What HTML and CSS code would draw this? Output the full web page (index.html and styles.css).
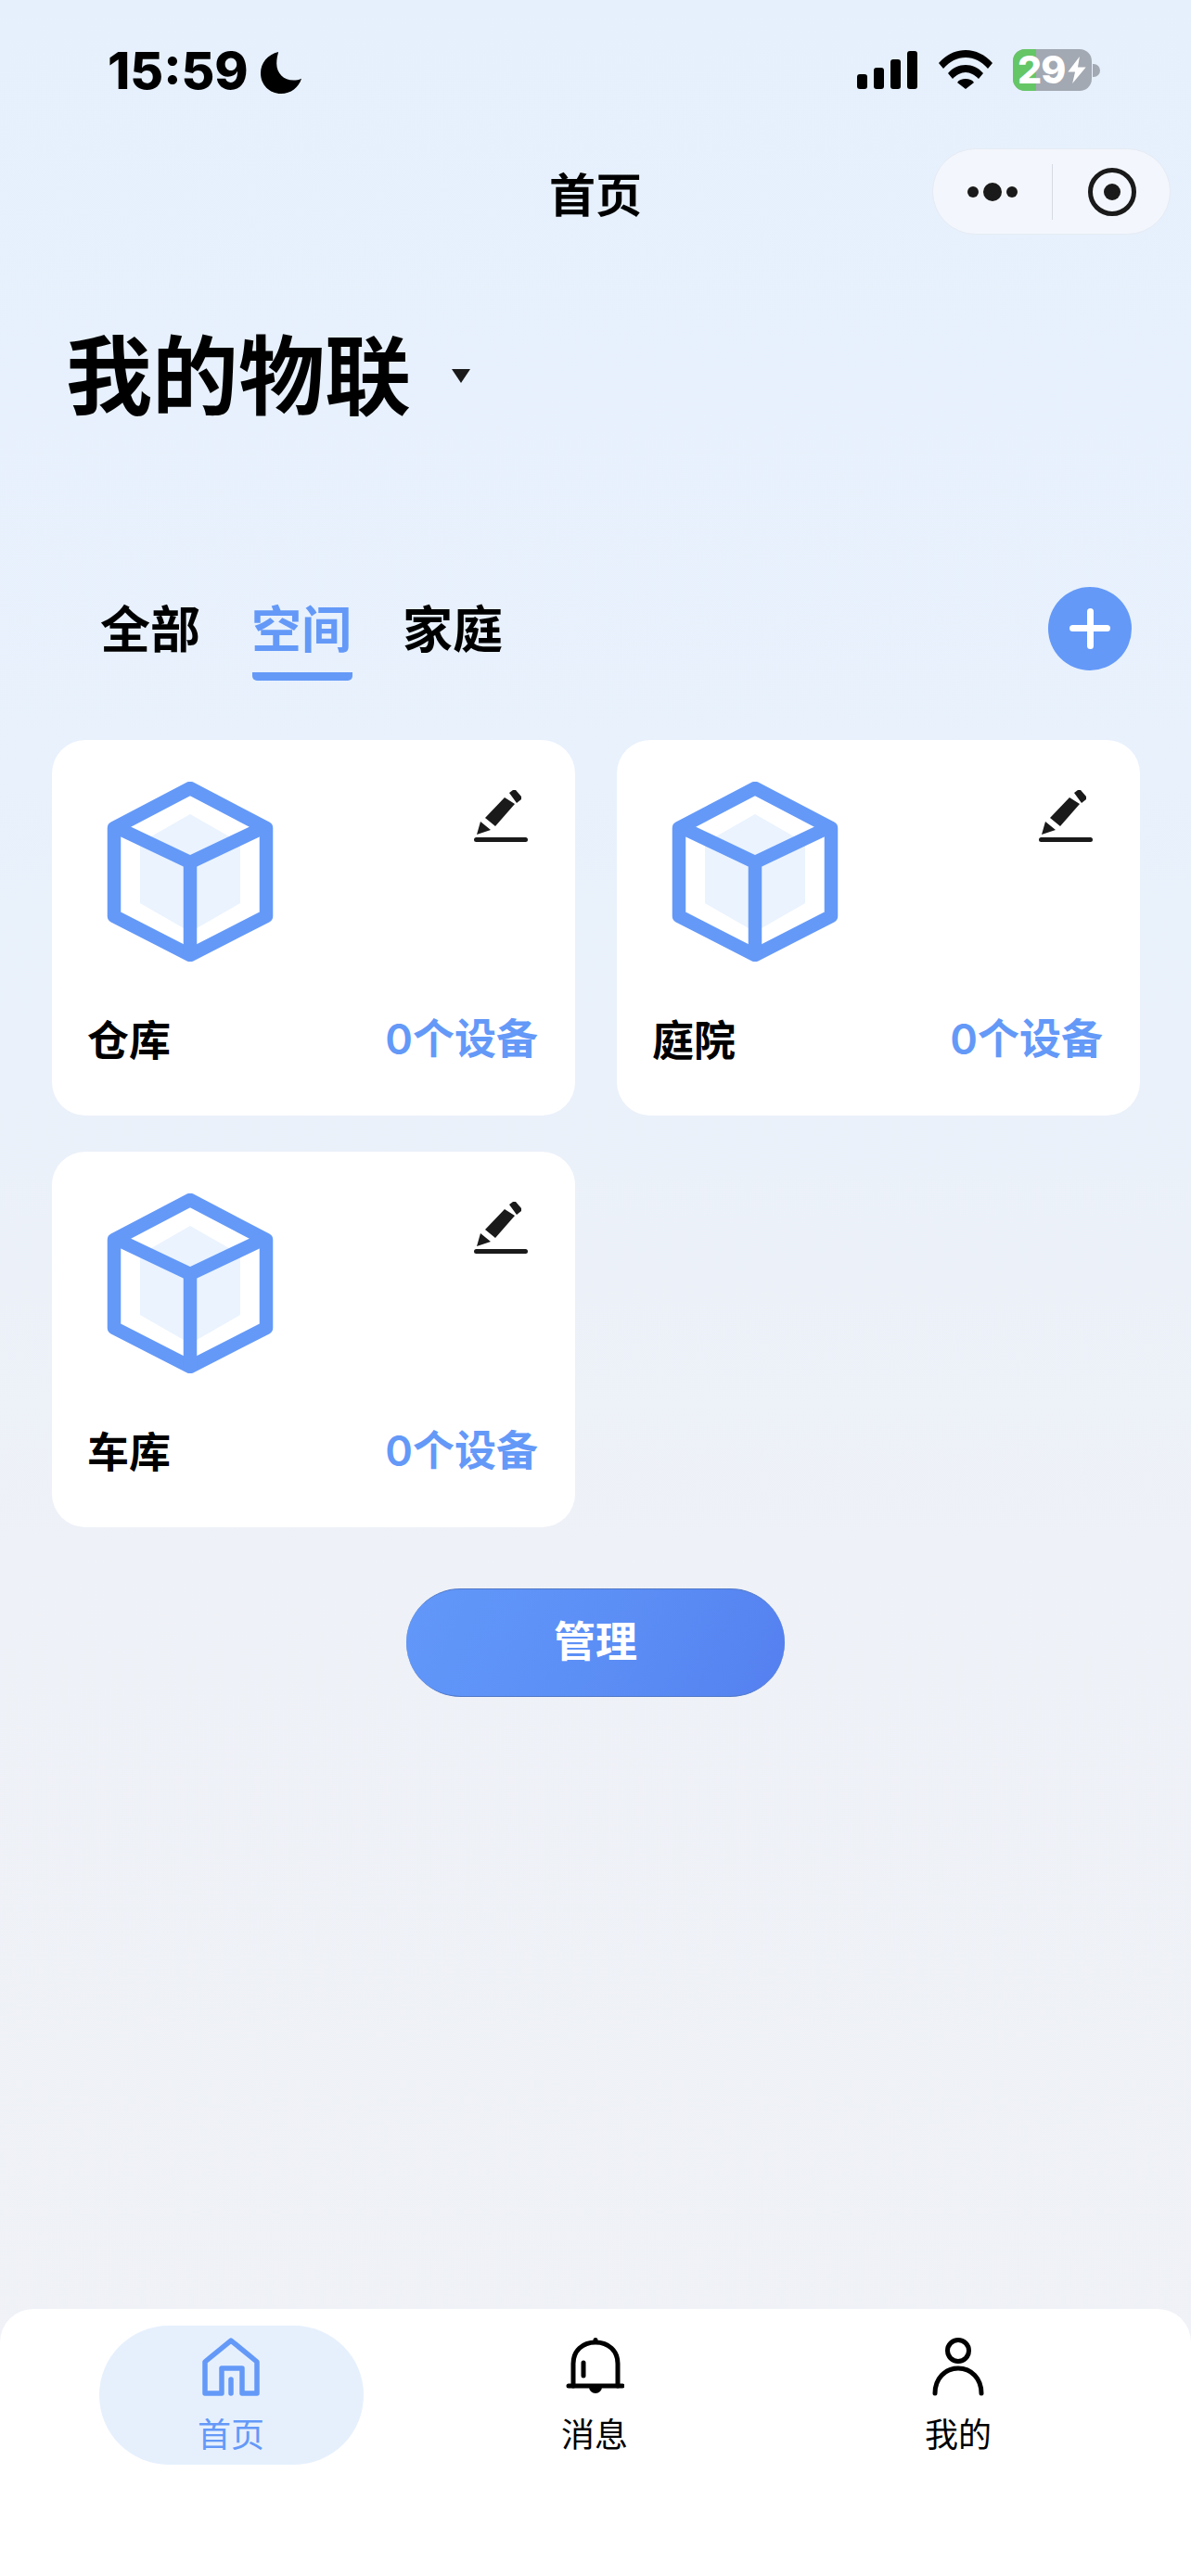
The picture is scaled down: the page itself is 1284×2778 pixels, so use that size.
FILE: index.html
```html
<!DOCTYPE html>
<html lang="zh">
<head>
<meta charset="utf-8">
<title>首页</title>
<link rel="stylesheet" href="styles.css">
</head>
<body>
<div class="screen">
  <header class="status">
    <div class="status-left">
      <span class="time">15:59</span>
      <svg class="moon" viewBox="0 0 46 48"><path d="M20 1C8 4 0 13 0 25c0 13 10 23 23 23 11 0 20-7 23-17-3 1.500-6 2-9 2-11 0-19-8-19-19 0-5 1-9 2-13z"/></svg>
    </div>
    <div class="status-right">
      <svg class="signal" viewBox="0 0 65 41"><rect x="0" y="25" width="11" height="16" rx="3"/><rect x="18" y="18" width="11" height="23" rx="3"/><rect x="36" y="9" width="11" height="32" rx="3"/><rect x="54" y="0" width="11" height="41" rx="3"/></svg>
      <svg class="wifi" viewBox="0 0 58 42"><path d="M0 14C8 5 18 0 29 0s21 5 29 14l-5 6C46 12 38 8 29 8S12 12 5 20z"/><path d="M10 25c5-6 12-9 19-9s14 3 19 9l-5 6c-4-4-9-7-14-7s-10 3-14 7z"/><path d="M20 35c2-3 5-4 9-4s7 1 9 4l-9 7z"/></svg>
      <div class="battery">
        <div class="battery-body"><div class="battery-fill"></div><span class="battery-num">29</span><svg class="bolt" viewBox="0 0 20 30"><path d="M13 0 0 17h8l-3 13L20 12h-9z"/></svg></div>
        <div class="battery-nub"></div>
      </div>
    </div>
  </header>

  <nav class="navbar">
    <div class="nav-title">首页</div>
    <div class="capsule">
      <div class="capsule-dots"><i class="dot"></i><i class="dot dot-big"></i><i class="dot"></i></div>
      <div class="capsule-sep"></div>
      <svg class="capsule-target" viewBox="0 0 52 52"><circle cx="26" cy="26" r="23.500" fill="none" stroke="#1a1a1a" stroke-width="5"/><circle cx="26" cy="26" r="9" fill="#1a1a1a"/></svg>
    </div>
  </nav>

  <section class="home-head">
    <h1 class="home-name">我的物联</h1>
    <span class="caret"></span>
  </section>

  <section class="tabs">
    <div class="tab-list">
      <div class="tab">全部</div>
      <div class="tab tab-active">空间</div>
      <div class="tab">家庭</div>
    </div>
    <div class="add-btn"><i class="plus-h"></i><i class="plus-v"></i></div>
  </section>

  <main class="grid">
    <article class="card">
      <div class="card-top">
        <svg class="cube" viewBox="0 0 180 194"><polygon points="90,35 144,66 144,131 90,162 36,131 36,66" fill="#eaf3fe"/><g fill="none" stroke="#6499f8" stroke-width="14.500" stroke-linejoin="round"><polygon points="90,7 172,50 172,145 90,187 8,145 8,50"/><polyline points="8,48 90,87 172,48"/><line x1="90" y1="87" x2="90" y2="187"/></g></svg>
        <svg class="pencil" viewBox="0 0 58 56"><path fill="#1a1a1a" d="M3 48l4-14 11 9zM12 30 33 8l11 7-21 24zM38 3l4-3h3l6 7v3l-5 4z"/><rect x="0" y="51" width="58" height="5" rx="2.500" fill="#1a1a1a"/></svg>
      </div>
      <div class="card-foot"><span class="card-name">仓库</span><span class="card-count">0个设备</span></div>
    </article>
    <article class="card">
      <div class="card-top">
        <svg class="cube" viewBox="0 0 180 194"><polygon points="90,35 144,66 144,131 90,162 36,131 36,66" fill="#eaf3fe"/><g fill="none" stroke="#6499f8" stroke-width="14.500" stroke-linejoin="round"><polygon points="90,7 172,50 172,145 90,187 8,145 8,50"/><polyline points="8,48 90,87 172,48"/><line x1="90" y1="87" x2="90" y2="187"/></g></svg>
        <svg class="pencil" viewBox="0 0 58 56"><path fill="#1a1a1a" d="M3 48l4-14 11 9zM12 30 33 8l11 7-21 24zM38 3l4-3h3l6 7v3l-5 4z"/><rect x="0" y="51" width="58" height="5" rx="2.500" fill="#1a1a1a"/></svg>
      </div>
      <div class="card-foot"><span class="card-name">庭院</span><span class="card-count">0个设备</span></div>
    </article>
    <article class="card">
      <div class="card-top">
        <svg class="cube" viewBox="0 0 180 194"><polygon points="90,35 144,66 144,131 90,162 36,131 36,66" fill="#eaf3fe"/><g fill="none" stroke="#6499f8" stroke-width="14.500" stroke-linejoin="round"><polygon points="90,7 172,50 172,145 90,187 8,145 8,50"/><polyline points="8,48 90,87 172,48"/><line x1="90" y1="87" x2="90" y2="187"/></g></svg>
        <svg class="pencil" viewBox="0 0 58 56"><path fill="#1a1a1a" d="M3 48l4-14 11 9zM12 30 33 8l11 7-21 24zM38 3l4-3h3l6 7v3l-5 4z"/><rect x="0" y="51" width="58" height="5" rx="2.500" fill="#1a1a1a"/></svg>
      </div>
      <div class="card-foot"><span class="card-name">车库</span><span class="card-count">0个设备</span></div>
    </article>
  </main>

  <div class="manage-wrap"><button class="manage">管理</button></div>

  <footer class="tabbar">
    <div class="tabbar-item tabbar-active">
      <svg class="tabbar-icon" viewBox="0 0 64 64" fill="none" stroke="#6499f8" stroke-width="5.500" stroke-linejoin="round" stroke-linecap="round"><path d="M32 3 4 26v34h18V33h22v27h16V26z"/><path d="M32 45v15"/></svg>
      <span class="tabbar-label">首页</span>
    </div>
    <div class="tabbar-item">
      <svg class="tabbar-icon" viewBox="0 0 64 64" fill="none" stroke="#000" stroke-width="5" stroke-linecap="round"><path d="M9 52V28C9 14 19 5 33 5s24 9 24 23v24"/><path d="M4 52h58"/><circle cx="33" cy="2.500" r="2.500" fill="#000" stroke="none"/><path d="M26 53a7 7 0 0 0 14 0z" fill="#000" stroke="none"/><path d="M20 27v14"/></svg>
      <span class="tabbar-label">消息</span>
    </div>
    <div class="tabbar-item">
      <svg class="tabbar-icon" viewBox="0 0 64 64" fill="none" stroke="#000" stroke-width="5" stroke-linecap="round"><circle cx="32" cy="14" r="11.500"/><path d="M7 60c0-16 11-27 25-27s25 11 25 27"/></svg>
      <span class="tabbar-label">我的</span>
    </div>
  </footer>
</div>
</body>
</html>
```

FILE: styles.css
```css
* { box-sizing: border-box; }
html, body { margin: 0; padding: 0; }
body { font-family: "Noto Sans CJK SC", "Inter", sans-serif; color: #000; }

.screen {
  width: 1284px;
  height: 2778px;
  display: flex;
  flex-direction: column;
  overflow: hidden;
  background: linear-gradient(180deg, #e6f0fd 0%, #e8f1fc 30%, #eef1f7 60%, #f0f2f7 100%);
}

.status {
  height: 150px;
  flex: none;
  padding: 53px 98px 0 116px;
  display: flex;
  justify-content: space-between;
  align-items: flex-start;
}
.status-left { display: flex; align-items: center; gap: 13px; height: 46px; }
.time { font-family: "Inter", sans-serif; font-weight: 800; font-size: 55px; line-height: 46px; letter-spacing: 0; }
.moon { width: 44px; height: 46px; fill: #000; margin-top: 3px; }
.status-right { display: flex; align-items: flex-start; }
.signal { width: 65px; height: 41px; margin-top: 2px; fill: #000; }
.wifi { width: 58px; height: 42px; margin: 1px 0 0 23px; fill: #000; }
.battery { display: flex; align-items: center; margin-left: 22px; }
.battery-body {
  position: relative;
  width: 85px;
  height: 45px;
  border-radius: 13px;
  background: #a3a9b2;
  display: flex;
  align-items: center;
  padding-left: 5px;
}
.battery-fill { position: absolute; left: 0; top: 0; bottom: 0; width: 25px; background: #65c666; border-radius: 13px 0 0 13px; }
.battery-num { position: relative; font-family: "Inter", sans-serif; font-weight: 800; font-size: 41px; line-height: 45px; color: #fff; letter-spacing: -1px; }
.bolt { position: relative; width: 20px; height: 29px; margin-left: 3px; fill: #fff; }
.battery-nub { width: 8px; height: 14px; background: #a3a9b2; border-radius: 0 7px 7px 0; margin-left: 1px; }

.navbar {
  position: relative;
  height: 103px;
  flex: none;
  margin-top: 10px;
  display: flex;
  justify-content: center;
  align-items: center;
}
.nav-title { font-weight: 700; font-size: 50px; line-height: 60px; margin-top: -10px; }
.capsule {
  position: absolute;
  right: 22px;
  top: 0;
  width: 257px;
  height: 93px;
  border-radius: 47px;
  background: #f3f7fd;
  border: 1px solid #e6ebf3;
  display: flex;
  align-items: center;
}
.capsule-dots { width: 128px; display: flex; justify-content: center; align-items: center; gap: 5px; }
.dot { display: block; width: 12px; height: 12px; border-radius: 50%; background: #1a1a1a; }
.dot-big { width: 20px; height: 20px; }
.capsule-sep { width: 1px; height: 60px; background: #d5dae2; }
.capsule-target { width: 52px; height: 52px; margin-left: 38px; }

.home-head {
  flex: none;
  height: 110px;
  margin-top: 82px;
  padding-left: 71px;
  display: flex;
  align-items: center;
}
.home-name { margin: 0; font-weight: 700; font-size: 93px; line-height: 110px; }
.caret {
  margin-left: 44px;
  margin-top: 10px;
  width: 0;
  height: 0;
  border-left: 10px solid transparent;
  border-right: 10px solid transparent;
  border-top: 15px solid #1a1a1a;
}

.tabs {
  flex: none;
  height: 100px;
  margin-top: 178px;
  padding: 0 64px 0 108px;
  display: flex;
  justify-content: space-between;
  align-items: flex-start;
}
.tab-list { display: flex; gap: 55px; padding-top: 8px; }
.tab { position: relative; font-weight: 700; font-size: 54px; line-height: 70px; white-space: nowrap; }
.tab-active { color: #6499f8; }
.tab-active::after {
  content: "";
  position: absolute;
  left: 1px;
  right: -1px;
  top: 84px;
  height: 9px;
  background: #6499f8;
  border-radius: 0 0 5px 5px;
}
.add-btn { position: relative; width: 90px; height: 90px; border-radius: 50%; background: #6499f8; }
.plus-h { position: absolute; left: 23px; top: 41px; width: 44px; height: 7px; background: #fff; border-radius: 4px; }
.plus-v { position: absolute; left: 41.500px; top: 23px; width: 7px; height: 44px; background: #fff; border-radius: 4px; }

.grid {
  flex: none;
  margin-top: 65px;
  padding: 0 55px 0 56px;
  display: grid;
  grid-template-columns: 564px 564px;
  column-gap: 45px;
  row-gap: 39px;
}
.card {
  height: 405px;
  background: #fff;
  border-radius: 36px;
  padding: 45px 40px 0 38px;
  display: flex;
  flex-direction: column;
}
.card-top { display: flex; justify-content: space-between; align-items: flex-start; height: 193px; }
.cube { width: 180px; height: 194px; margin-left: 21px; }
.pencil { width: 58px; height: 56px; margin: 9px 11px 0 0; }
.card-foot { display: flex; justify-content: space-between; align-items: center; margin-top: 54px; height: 60px; }
.card-name { font-weight: 700; font-size: 45px; line-height: 60px; }
.card-count { font-weight: 600; font-size: 45px; line-height: 60px; padding-top: 2px; color: #6499f8; font-family: "Inter", "Noto Sans CJK SC", sans-serif; }

.manage-wrap { flex: none; margin-top: 66px; display: flex; justify-content: center; }
.manage {
  width: 408px;
  height: 117px;
  border: none;
  border-top: 1px solid #5078c8;
  border-bottom: 1px solid #5078c8;
  border-radius: 59px;
  background: linear-gradient(115deg, #6298f9 0%, #5c8ff6 50%, #5480ef 100%);
  color: #fff;
  font-family: inherit;
  font-weight: 700;
  font-size: 45px;
  line-height: 60px;
  padding: 0 0 8px;
}

.tabbar {
  margin-top: auto;
  height: 288px;
  flex: none;
  background: #fff;
  border-radius: 36px 36px 0 0;
  padding: 18px 53px 0;
  display: grid;
  grid-template-columns: repeat(3, 392px);
  align-items: start;
  justify-items: center;
}
.tabbar-item {
  width: 285px;
  height: 150px;
  border-radius: 75px;
  display: flex;
  flex-direction: column;
  align-items: center;
  padding-top: 13px;
}
.tabbar-active { background: #e6f0fd; color: #6499f8; }
.tabbar-icon { width: 64px; height: 64px; display: block; }
.tabbar-label { font-size: 36px; line-height: 48px; margin-top: 14px; font-weight: 400; }
```
